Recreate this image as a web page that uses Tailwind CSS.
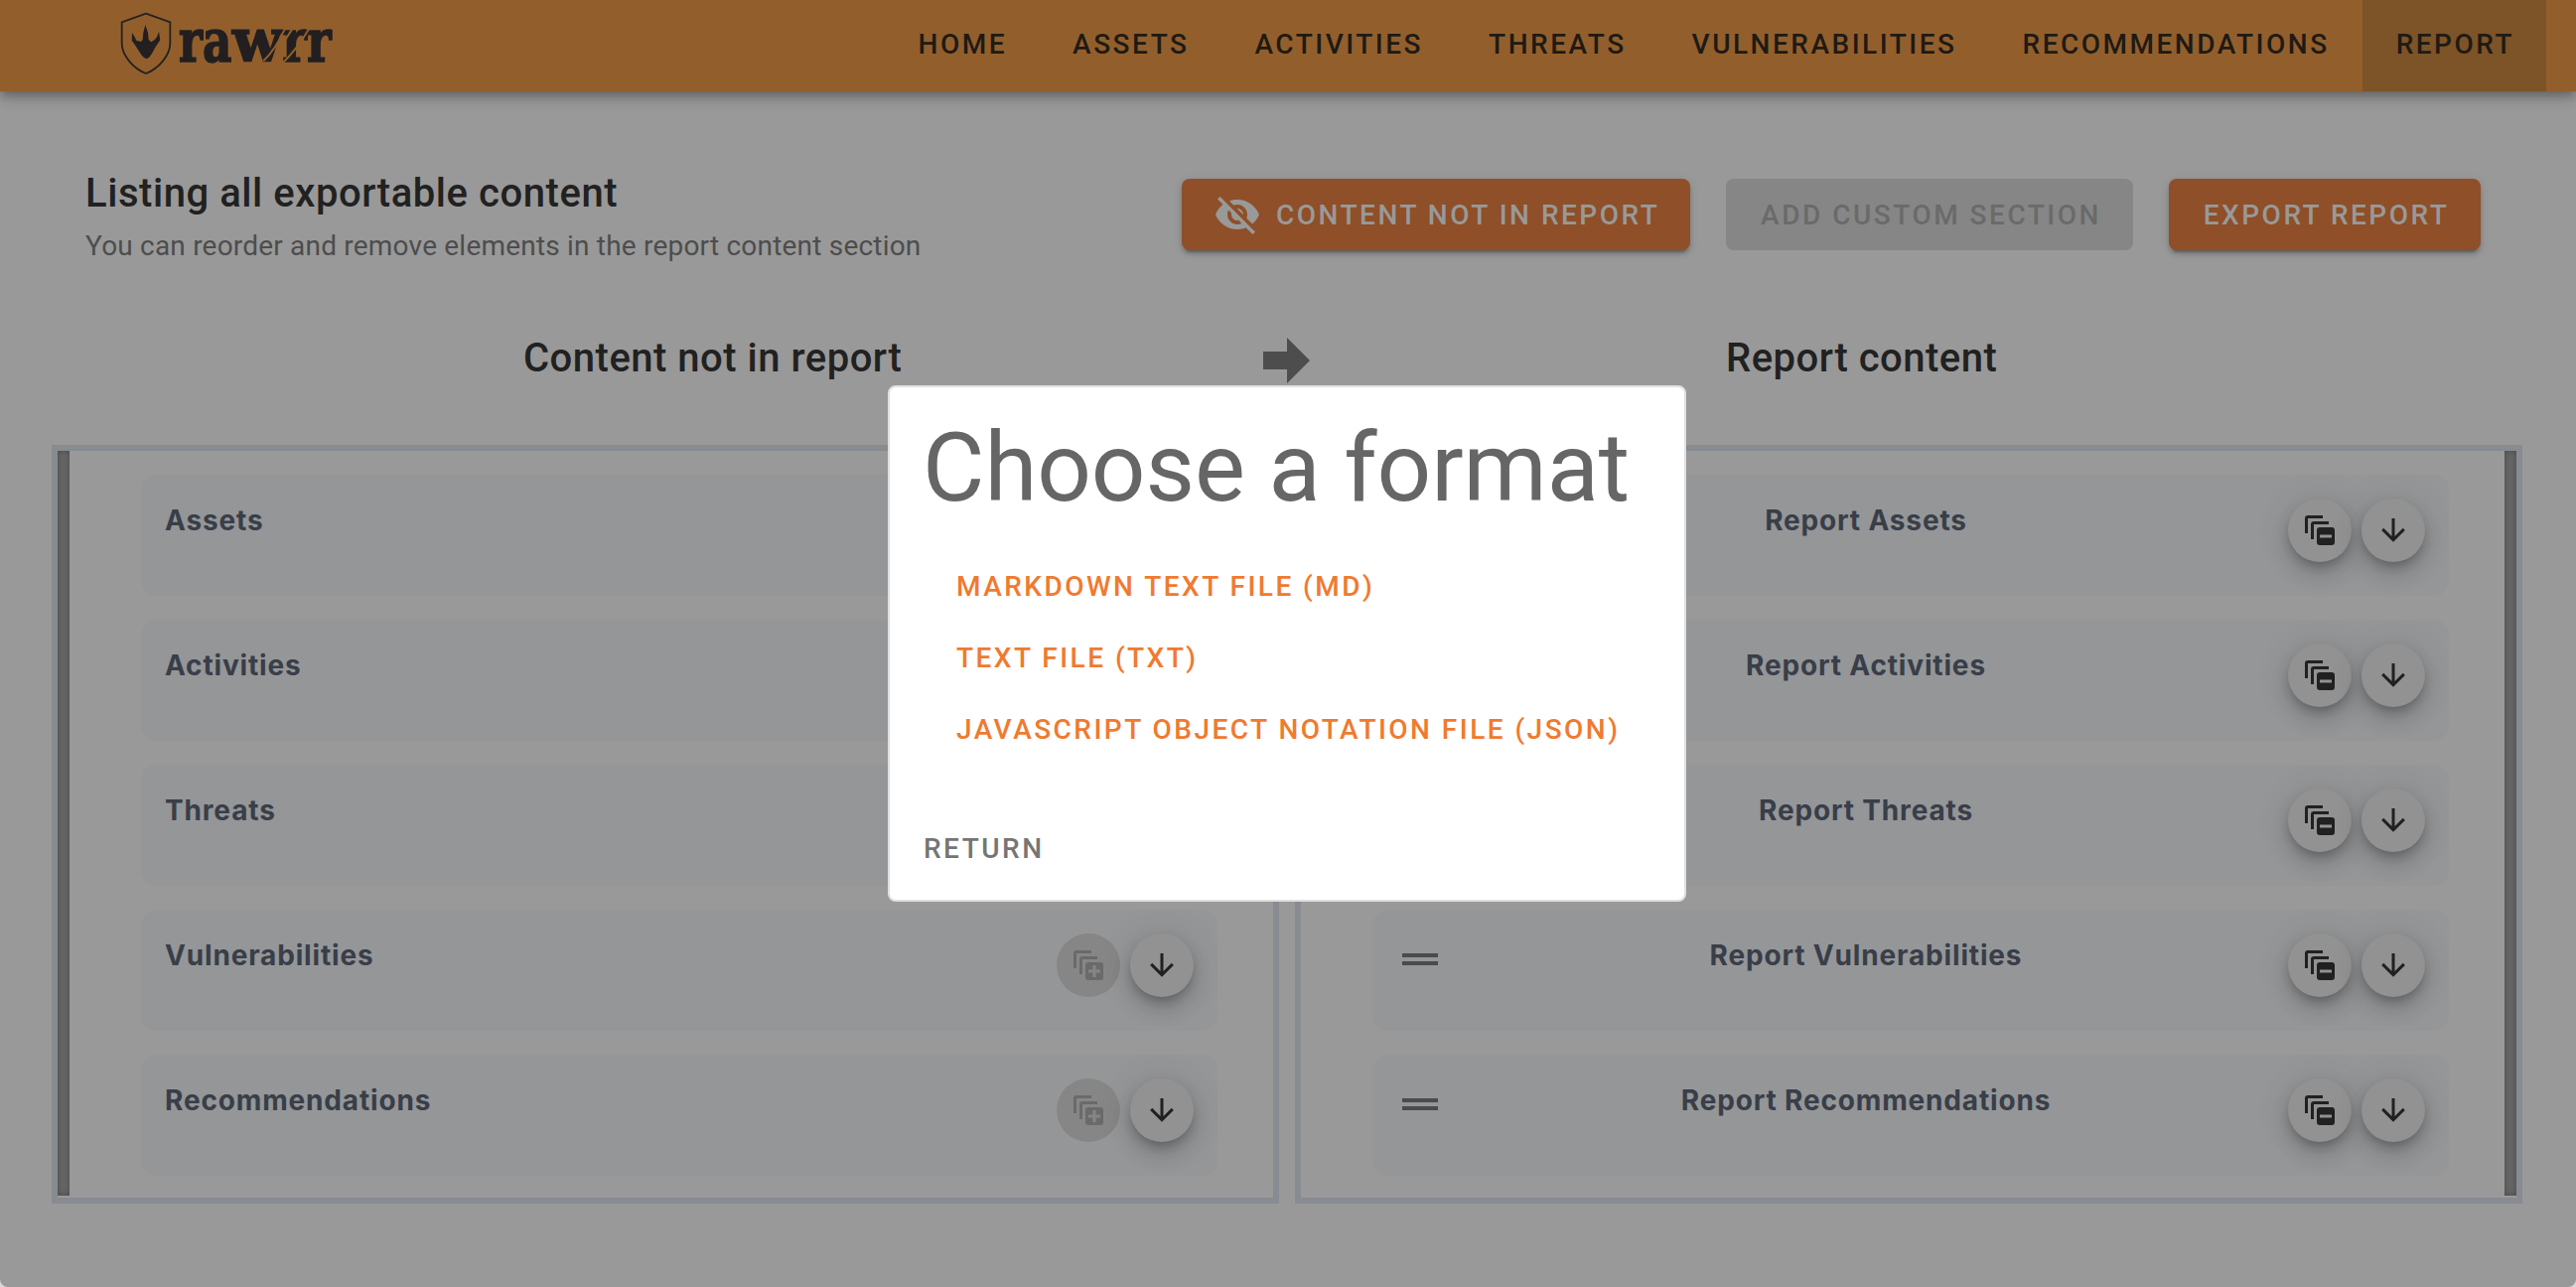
<!DOCTYPE html>
<html lang="en">
<head>
<meta charset="utf-8">
<title>rawrr - Report</title>
<script src="https://cdn.jsdelivr.net/npm/@tailwindcss/browser@4"></script>
</head>
<body class="bg-[#d8d8d8]">
<svg class="hidden">
  <symbol id="minus" viewBox="0 0 24 24"><path d="M14 2H4a2 2 0 0 0-2 2v10h2V4h10zM18 6H8a2 2 0 0 0-2 2v10h2V8h10zM12 10h8a2 2 0 0 1 2 2v8a2 2 0 0 1-2 2h-8a2 2 0 0 1-2-2v-8a2 2 0 0 1 2-2zm0 5v2h8v-2z"/></symbol>
  <symbol id="plus" viewBox="0 0 24 24"><path d="M14 2H4a2 2 0 0 0-2 2v10h2V4h10zM18 6H8a2 2 0 0 0-2 2v10h2V8h10zM12 10h8a2 2 0 0 1 2 2v8a2 2 0 0 1-2 2h-8a2 2 0 0 1-2-2v-8a2 2 0 0 1 2-2zm3 2v3h-3v2h3v3h2v-3h3v-2h-3v-3z"/></symbol>
  <symbol id="down" viewBox="0 0 24 24"><path d="M11 4h2v12l5.5-5.5 1.42 1.42L12 19.84l-7.92-7.92L5.5 10.5 11 16z"/></symbol>
</svg>
<div class="relative flex h-[1296px] w-[2594px] flex-col overflow-hidden rounded-b-[8px] bg-[#999999] font-['Roboto',sans-serif]">

  <header class="z-10 flex h-[92px] shrink-0 items-stretch justify-between bg-[#925f2c] pr-[30px] pl-[100px] shadow-[0_4px_8px_-2px_rgba(0,0,0,.2),0_8px_10px_0_rgba(0,0,0,.14),0_2px_20px_0_rgba(0,0,0,.12)]">
    <svg class="h-[90px] w-[260px]" viewBox="0 0 780 270">
      <path d="M141 41L214 67V130C214 166 182 206 141 222C100 206 68 166 68 130V67Z" fill="none" stroke="#262221" stroke-width="5.5" stroke-linejoin="round"/>
      <path d="M139 75L147 98 149 120 157 127Q168 122 174 112L180 96 184 121Q170 140 160 160Q150 177 144 177Q134 177 122 158Q108 135 98 122L99 99Q107 110 112 122L126 126 131 120Q131 100 139 75Z" fill="#231f20"/>
      <text y="186" font-family="DejaVu Serif" font-weight="bold" font-size="178" fill="#231f20" stroke="#231f20" stroke-width="5"><tspan x="240" textLength="160" lengthAdjust="spacingAndGlyphs">ra</tspan><tspan x="402" textLength="150" lengthAdjust="spacingAndGlyphs">w</tspan><tspan x="553" textLength="148" lengthAdjust="spacingAndGlyphs">rr</tspan></text>
      <path d="M496 184Q532 150 560 88M552 192Q596 150 634 86M558 126L584 86" fill="none" stroke="#925f2c" stroke-width="6"/>
    </svg>
    <nav class="flex text-[28px] leading-[90px] font-medium tracking-[2.5px] text-[#1f1a14]">
      <a class="px-[33px]">HOME</a>
      <a class="px-[33px]">ASSETS</a>
      <a class="px-[33px]">ACTIVITIES</a>
      <a class="px-[33px]">THREATS</a>
      <a class="px-[33px]">VULNERABILITIES</a>
      <a class="px-[33px]">RECOMMENDATIONS</a>
      <a class="bg-[#7d5328] pr-[32px] pl-[34px]">REPORT</a>
    </nav>
  </header>

  <section class="mt-[72px] flex h-[108px] shrink-0 items-start justify-between pr-24 pl-[86px]">
    <div class="pt-[7px]">
      <h1 class="text-[40px] leading-[48px] font-medium tracking-[.55px] text-[#212121]">Listing all exportable content</h1>
      <p class="mt-[9px] text-[28px] leading-[40px] tracking-[.2px] text-[#4d4d4d]">You can reorder and remove elements in the report content section</p>
    </div>
    <div class="mt-4 flex gap-9 text-[28px] leading-[74px] font-medium tracking-[2.5px] text-[#999999]">
      <button class="flex h-[72px] w-[512px] items-center gap-[15px] rounded-lg bg-[#8f4f28] pl-8 whitespace-nowrap shadow-[0_6px_2px_-4px_rgba(0,0,0,.2),0_4px_4px_0_rgba(0,0,0,.14),0_2px_10px_0_rgba(0,0,0,.12)]">
        <svg class="size-12 shrink-0 fill-current" viewBox="0 0 24 24"><path d="M12 7c2.76 0 5 2.24 5 5 0 .65-.13 1.26-.36 1.83l2.92 2.92c1.51-1.26 2.7-2.89 3.43-4.75-1.73-4.39-6-7.5-11-7.5-1.4 0-2.74.25-3.98.7l2.16 2.16C10.74 7.13 11.35 7 12 7zM2 4.27l2.28 2.28.46.46C3.08 8.3 1.78 10.02 1 12c1.73 4.39 6 7.5 11 7.5 1.55 0 3.03-.3 4.38-.84l.42.42L19.73 22 21 20.73 3.27 3 2 4.27zM7.53 9.8l1.55 1.55c-.05.21-.08.43-.08.65 0 1.66 1.34 3 3 3 .22 0 .44-.03.65-.08l1.55 1.55c-.67.33-1.41.53-2.2.53-2.76 0-5-2.24-5-5 0-.79.2-1.53.53-2.2zm4.31-.78l3.15 3.15.02-.16c0-1.66-1.34-3-3-3l-.17.01z"/></svg>
        <span class="pt-px">CONTENT NOT IN REPORT</span>
      </button>
      <button class="h-[72px] w-[410px] rounded-lg bg-[#868686] pl-[3px] whitespace-nowrap text-[#6a6a6a]">ADD CUSTOM SECTION</button>
      <button class="h-[72px] w-[314px] rounded-lg bg-[#8f4f28] pl-[3px] whitespace-nowrap shadow-[0_6px_2px_-4px_rgba(0,0,0,.2),0_4px_4px_0_rgba(0,0,0,.14),0_2px_10px_0_rgba(0,0,0,.12)]">EXPORT REPORT</button>
    </div>
  </section>

  <section class="mt-[60px] flex h-[116px] shrink-0 items-start pt-[5px] text-[40px] leading-[48px] font-medium tracking-[.5px] text-[#212121]">
    <h2 class="ml-[527px] w-[745px]">Content not in report</h2>
    <svg class="mt-[3px] h-[46px] w-[47px]" viewBox="0 0 47 46" fill="#4d4d4d"><path d="M0 14h24V0l23 23-23 23V32H0z"/></svg>
    <h2 class="ml-[419px]">Report content</h2>
  </section>

  <main class="flex h-[764px] shrink-0 gap-4 pl-[52px]">
    <div class="flex w-[1236px] border-[6px] border-[#888b91] border-t-[#868c90]">
      <div class="h-[750px] w-3 bg-[#666666] shadow-[inset_0_0_6px_rgba(0,0,0,.3)]"></div>
      <div id="available" class="ml-[72px] flex w-[1084px] flex-col gap-6 pt-6"></div>
    </div>
    <div class="flex w-[1236px] border-[6px] border-[#888b91] border-t-[#868c90]">
      <div id="included" class="ml-[72px] flex w-[1084px] flex-col gap-6 pt-6"></div>
      <div class="ml-14 h-[750px] w-3 bg-[#666666] shadow-[inset_0_0_6px_rgba(0,0,0,.3)]"></div>
    </div>
  </main>

  <div class="absolute top-[388px] left-[894px] z-20 flex h-[520px] w-[804px] flex-col items-start rounded-lg border-2 border-[#e0e0e0] bg-white pl-[33px]">
    <h2 class="mt-[31px] text-[96px] leading-[100px] tracking-[-.1px] whitespace-nowrap text-[#666666]">Choose a format</h2>
    <div class="mt-[34px] flex flex-col pl-[34px] text-[28px] leading-[72px] font-medium tracking-[2.47px] whitespace-nowrap text-[#f07a2f]">
      <button class="text-left">MARKDOWN TEXT FILE (MD)</button>
      <button class="text-left">TEXT FILE (TXT)</button>
      <button class="text-left">JAVASCRIPT OBJECT NOTATION FILE (JSON)</button>
    </div>
    <button class="mt-[48px] pl-[1px] text-[28px] leading-[72px] font-medium tracking-[2.5px] text-[#757575]">RETURN</button>
  </div>
</div>
<script>
  const names = ['Assets', 'Activities', 'Threats', 'Vulnerabilities', 'Recommendations'];
  const fab = 'z-[1] flex size-16 items-center justify-center rounded-full bg-[#929292] text-[#212121] shadow-[0_6px_10px_-2px_rgba(0,0,0,.2),0_12px_20px_0_rgba(0,0,0,.14),0_2px_36px_0_rgba(0,0,0,.12)]';
  const off = 'flex size-16 items-center justify-center rounded-full bg-[#868686] text-[#6a6a6a]';
  const icon = id => `<svg class="size-9 fill-current"><use href="#${id}"/></svg>`;
  const card = 'flex h-[122px] items-start overflow-hidden rounded-2xl bg-[#949698]';
  const title = "font-['Inter',sans-serif] text-[28px] leading-[40px] font-[650] tracking-[.84px] text-[#393e48]";
  available.innerHTML = names.map(n => `<div class="${card}">
    <div class="${title} flex-1 pt-[26px] pl-6">${n}</div>
    <div class="flex gap-[10px] pt-6 pr-6"><div class="${off}">${icon('plus')}</div><div class="${fab}">${icon('down')}</div></div></div>`).join('');
  included.innerHTML = names.map(n => `<div class="${card}">
    <div class="mt-11 ml-[30px] h-3 w-9 border-y-4 border-[#4b4b4b]"></div>
    <div class="${title} mr-1 ml-[10px] w-[842px] pt-[26px] text-center">Report ${n}</div>
    <div class="flex gap-[10px] pt-6"><div class="${fab}">${icon('minus')}</div><div class="${fab}">${icon('down')}</div></div></div>`).join('');
</script>
</body>
</html>
